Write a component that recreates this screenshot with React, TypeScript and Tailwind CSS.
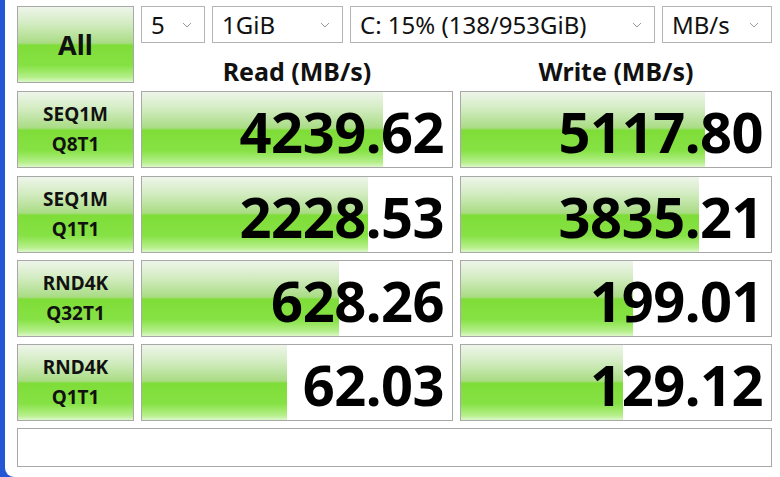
import React from "react";

const FONT = { fontFamily: '"Noto Sans", "Open Sans", sans-serif' };

const greenBg =
  "bg-[linear-gradient(to_bottom,#eef5ea_0%,#d3ecc2_22%,#a9dc84_48%,#7fdd38_51%,#86e244_78%,#b6ef8c_94%,#dcf7c8_100%)]";

function Chevron() {
  return (
    <svg width="10" height="6" viewBox="0 0 10 6" className="shrink-0">
      <path d="M1 1 L5 5 L9 1" fill="none" stroke="#9a9a9a" strokeWidth="1" />
    </svg>
  );
}

function Select({ w, label }: { w: string; label: string }) {
  return (
    <div
      className={`${w} h-[37px] border border-[#b4b4b4] bg-white flex items-center justify-between pl-[9px] pr-[12px]`}
    >
      <span className="text-[24px] leading-[1.1] text-[#111] pt-[2px]">{label}</span>
      <Chevron />
    </div>
  );
}

function Label({ a, b }: { a: string; b: string }) {
  return (
    <div
      className={`w-[117px] h-[77px] border border-[#a8a8a8] ${greenBg} flex flex-col items-center justify-center gap-[9px] shrink-0`}
    >
      <span className="text-[19px] font-bold leading-[1.1] text-[#111]">{a}</span>
      <span className="text-[19px] font-bold leading-[1.1] text-[#111]">{b}</span>
    </div>
  );
}

function Cell({ value, bar }: { value: string; bar: number }) {
  return (
    <div className="relative w-[312px] h-[77px] border border-[#a8a8a8] bg-white shrink-0">
      <div className={`absolute left-0 top-0 bottom-0 ${greenBg}`} style={{ width: bar }} />
      <div className="relative h-full flex items-center justify-end pr-[8px] pt-[4px]">
        <span className="text-[56px] font-bold leading-[1.15] text-black tracking-[-0.5px] whitespace-nowrap">
          {value}
        </span>
      </div>
    </div>
  );
}

const rows = [
  { a: "SEQ1M", b: "Q8T1", r: "4239.62", rb: 241, w: "5117.80", wb: 244, mt: "mt-[8px]" },
  { a: "SEQ1M", b: "Q1T1", r: "2228.53", rb: 226, w: "3835.21", wb: 238, mt: "mt-[8px]" },
  { a: "RND4K", b: "Q32T1", r: "628.26", rb: 197, w: "199.01", wb: 172, mt: "mt-[7px]" },
  { a: "RND4K", b: "Q1T1", r: "62.03", rb: 145, w: "129.12", wb: 162, mt: "mt-[7px]" },
];

export default function App() {
  return (
    <div className="w-[780px] h-[477px] flex bg-[#2456d6] overflow-hidden" style={FONT}>
      <div className="w-[5px] shrink-0" />
      <div className="flex-1 bg-white rounded-bl-[9px] pl-[12px] pt-[6px] flex flex-col">
        <div className="flex gap-[7px] h-[77px] shrink-0">
          <div
            className={`w-[117px] h-[77px] border border-[#a8a8a8] ${greenBg} flex items-center justify-center shrink-0`}
          >
            <span className="text-[27px] font-bold leading-[1.1] text-[#111]">All</span>
          </div>
          <div className="w-[631px] h-[77px] flex flex-col">
            <div className="flex gap-[7px] h-[37px] shrink-0">
              <Select w="w-[64px]" label="5" />
              <Select w="w-[131px]" label="1GiB" />
              <Select w="w-[305px]" label="C: 15% (138/953GiB)" />
              <Select w="w-[110px]" label="MB/s" />
            </div>
            <div className="flex gap-[7px] h-[40px] shrink-0 items-start pt-[15px]">
              <div className="w-[312px] text-center text-[25px] font-bold text-[#111] leading-[1.1]">
                Read (MB/s)
              </div>
              <div className="w-[312px] text-center text-[25px] font-bold text-[#111] leading-[1.1]">
                Write (MB/s)
              </div>
            </div>
          </div>
        </div>
        {rows.map((row, i) => (
          <div key={i} className={`flex gap-[7px] ${row.mt}`}>
            <Label a={row.a} b={row.b} />
            <Cell value={row.r} bar={row.rb} />
            <Cell value={row.w} bar={row.wb} />
          </div>
        ))}
        <div className="mt-[7px] w-[755px] h-[39px] border border-[#a8a8a8] bg-white" />
      </div>
    </div>
  );
}
